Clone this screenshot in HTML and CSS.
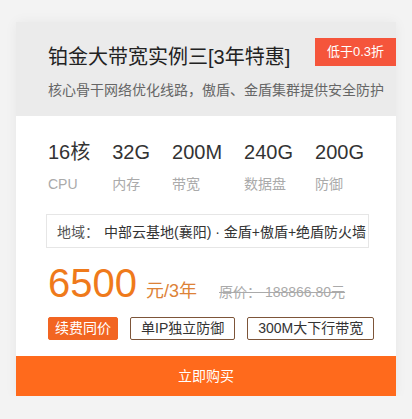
FILE: index.html
```html
<!DOCTYPE html>
<html lang="zh">
<head>
<meta charset="utf-8">
<link rel="stylesheet" href="styles.css">
</head>
<body>
<div class="card">
  <div class="head">
    <div class="title">铂金大带宽实例三[3年特惠]</div>
    <div class="sub">核心骨干网络优化线路，傲盾、金盾集群提供安全防护</div>
    <div class="badge">低于0.3折</div>
  </div>
  <div class="body">
    <div class="specs">
      <div class="spec"><div class="val">16核</div><div class="lab">CPU</div></div>
      <div class="spec"><div class="val">32G</div><div class="lab">内存</div></div>
      <div class="spec"><div class="val">200M</div><div class="lab">带宽</div></div>
      <div class="spec"><div class="val">240G</div><div class="lab">数据盘</div></div>
      <div class="spec"><div class="val">200G</div><div class="lab">防御</div></div>
    </div>
    <div class="region"><span class="rlab">地域：</span><span class="rval">中部云基地(襄阳) · 金盾+傲盾+绝盾防火墙</span></div>
    <div class="price">
      <span class="num">6500</span>
      <span class="unit">元/3年</span>
      <span class="orig">原价： 188866.80元</span>
    </div>
    <div class="tags">
      <span class="tag fill">续费同价</span>
      <span class="tag">单IP独立防御</span>
      <span class="tag">300M大下行带宽</span>
    </div>
  </div>
  <div class="buy">立即购买</div>
</div>
</body>
</html>
```

FILE: styles.css
```css
html, body {
  margin: 0;
  padding: 0;
  background: #f3f3f3;
  font-family: "Liberation Sans", "Noto Sans CJK SC", sans-serif;
}
.card {
  margin: 22px 0 0 16px;
  width: 380px;
  background: #fff;
  box-shadow: 0 0 12px rgba(0,0,0,0.05);
}
.head {
  position: relative;
  background: #ebebeb;
  padding: 21px 0 16px 32px;
}
.title {
  font-size: 20px;
  line-height: 28px;
  color: #222;
}
.sub {
  margin-top: 9px;
  font-size: 14px;
  line-height: 20px;
  color: #666;
  white-space: nowrap;
}
.badge {
  position: absolute;
  top: 16px;
  right: 0;
  height: 28px;
  line-height: 28px;
  padding: 0 12px;
  background: #f5553b;
  color: #fff;
  font-size: 13px;
}
.body {
  padding: 22px 0 16px 32px;
}
.specs {
  display: flex;
  gap: 22px;
}
.val {
  font-size: 20px;
  line-height: 28px;
  color: #333;
}
.lab {
  margin-top: 9px;
  font-size: 14px;
  line-height: 18px;
  color: #aaa;
}
.region {
  margin: 21px 0 0 -2px;
  width: fit-content;
  height: 32px;
  border: 1px solid #e6e6e6;
  padding: 0 2px 0 10px;
  display: flex;
  align-items: center;
  font-size: 14px;
  white-space: nowrap;
}
.rlab { color: #555; width: 47px; flex: none; }
.rval { color: #333; }
.price {
  margin-top: 14px;
  display: flex;
  align-items: baseline;
  height: 42px;
}
.num {
  font-size: 40px;
  line-height: 42px;
  color: #ef7a1b;
}
.unit {
  margin-left: 9px;
  font-size: 18px;
  color: #dd8237;
}
.orig {
  margin-left: 22px;
  font-size: 14px;
  color: #aaa;
  text-decoration: line-through;
}
.tags {
  margin-top: 13px;
  display: flex;
  gap: 12px;
}
.tag {
  height: 21px;
  line-height: 21px;
  padding: 0 10px;
  border: 1px solid #7d5539;
  border-radius: 2px;
  font-size: 14px;
  color: #333;
}
.tag.fill {
  background: #f26522;
  border-color: #f26522;
  color: #fff;
  padding: 0 6px;
}
.buy {
  height: 40px;
  line-height: 40px;
  text-align: center;
  background: #ff6a1c;
  color: #fff;
  font-size: 14px;
}
```
